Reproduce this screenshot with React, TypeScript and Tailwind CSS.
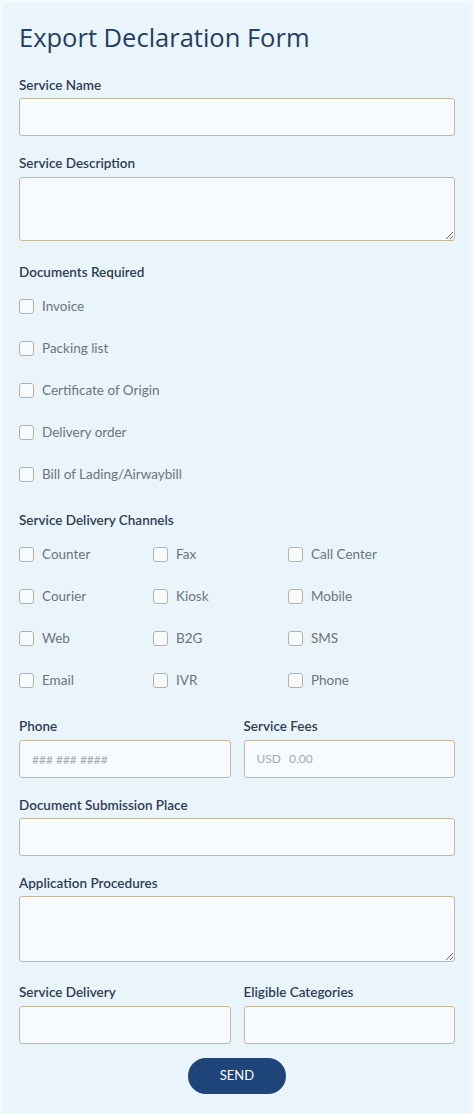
import React from "react";

const labelCls = "block text-[13.5px] leading-4 text-[#2e3d55] font-semibold";
const inputCls =
  "block w-full h-[38px] rounded-[3px] border border-[#c4b99f] bg-[#f7fbfe] px-3 text-[12px] outline-none";
const areaCls =
  "block w-full rounded-[3px] border border-[#c4b99f] bg-[#f7fbfe] px-3 py-2 text-[12px] outline-none";

function Check({ label }: { label: string }) {
  return (
    <label className="flex items-center h-[42px] gap-2">
      <span className="block w-[15px] h-[15px] rounded-[3px] border border-[#bcaf95] bg-[#f7fbfe] shrink-0" />
      <span className="text-[13.5px] text-[#6c7480]">{label}</span>
    </label>
  );
}

export default function App() {
  const docs = ["Invoice", "Packing list", "Certificate of Origin", "Delivery order", "Bill of Lading/Airwaybill"];
  const channels = ["Counter", "Fax", "Call Center", "Courier", "Kiosk", "Mobile", "Web", "B2G", "SMS", "Email", "IVR", "Phone"];
  return (
    <div
      className="w-[474px] min-h-[1114px] border-[3px] border-[#f4f9fc] bg-[#eaf5fb] px-4"
      style={{ fontFamily: "Lato, 'Noto Sans', sans-serif" }}
    >
      <h1
        className="pt-[18px] text-[25.5px] leading-[32px] text-[#253e63]"
        style={{ fontFamily: "'Open Sans', 'Noto Sans', sans-serif" }}
      >
        Export Declaration Form
      </h1>

      <div className="mt-[24px]">
        <span className={labelCls}>Service Name</span>
        <input className={inputCls + " mt-[5px]"} />
      </div>

      <div className="mt-[19px]">
        <span className={labelCls}>Service Description</span>
        <textarea className={areaCls + " mt-[6px] h-[64px]"} />
      </div>

      <div className="mt-[23px]">
        <span className={labelCls}>Documents Required</span>
        <div className="mt-[5px] flex flex-col">
          {docs.map((d) => (
            <Check key={d} label={d} />
          ))}
        </div>
      </div>

      <div className="mt-[17px]">
        <span className={labelCls}>Service Delivery Channels</span>
        <div className="mt-[5px] grid grid-cols-[134px_135px_1fr]">
          {channels.map((c) => (
            <Check key={c} label={c} />
          ))}
        </div>
      </div>

      <div className="mt-[17px] grid grid-cols-2 gap-x-[13px]">
        <div>
          <span className={labelCls}>Phone</span>
          <input className={inputCls + " mt-[6px] placeholder:text-[#a3aab4]"} placeholder="### ### ####" />
        </div>
        <div>
          <span className={labelCls}>Service Fees</span>
          <div className="mt-[6px] flex items-center h-[38px] rounded-[3px] border border-[#c4b99f] bg-[#f7fbfe] px-3 text-[12px] text-[#a3aab4] gap-2">
            <span>USD</span>
            <span>0.00</span>
          </div>
        </div>
      </div>

      <div className="mt-[19px]">
        <span className={labelCls}>Document Submission Place</span>
        <input className={inputCls + " mt-[5px]"} />
      </div>

      <div className="mt-[19px]">
        <span className={labelCls}>Application Procedures</span>
        <textarea className={areaCls + " mt-[5px] h-[66px]"} />
      </div>

      <div className="mt-[22px] grid grid-cols-2 gap-x-[13px]">
        <div>
          <span className={labelCls}>Service Delivery</span>
          <input className={inputCls + " mt-[6px]"} />
        </div>
        <div>
          <span className={labelCls}>Eligible Categories</span>
          <input className={inputCls + " mt-[6px]"} />
        </div>
      </div>

      <div className="mt-[14px] flex justify-center pb-5">
        <button className="h-[36px] w-[98px] rounded-full bg-[#1e4479] text-[13px] text-white">SEND</button>
      </div>
    </div>
  );
}
